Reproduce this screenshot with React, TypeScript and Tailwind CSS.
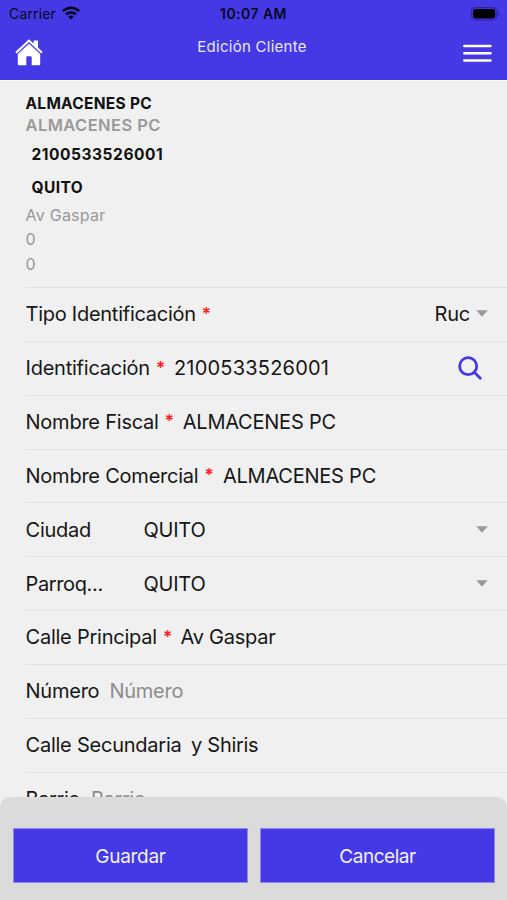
import React from 'react';

interface FieldRowProps {
  label: string;
  required?: boolean;
  labelClass?: string;
  children?: React.ReactNode;
}

const Caret: React.FC = () => (
  <svg width="12" height="7" viewBox="0 0 12 7" className="mb-px shrink-0" fill="#999999">
    <path d="M0.3 0.3H11.7L6 6.7Z" />
  </svg>
);

const FieldRow: React.FC<FieldRowProps> = ({ label, required, labelClass = '', children }) => (
  <div className="ml-[25px] flex h-[53.85px] shrink-0 items-center whitespace-pre border-b border-[#e2e2e2] pl-[0.5px] pr-[19px] text-[20px] tracking-[-0.23px] text-[#161616]">
    <span className={labelClass}>{label}</span>
    {required && <span className="ml-[6px] w-[9px] text-[17px] font-semibold text-[#ff1a1a]">*</span>}
    {children}
  </div>
);

const StatusBar: React.FC = () => (
  <div className="grid h-[27px] grid-cols-3 items-center pl-[9px] pr-[7px] text-[14px] text-[#080820]">
    <div className="flex items-center gap-[6px]">
      <span className="tracking-[0.15px]">Carrier</span>
      <svg width="18" height="14" viewBox="0 0 18 14" className="mb-px" fill="none" stroke="#05051a" strokeWidth="2.5">
        <path d="M0.9 5.2C5.4 0.6 12.6 0.6 17.1 5.2" />
        <path d="M4 8.4C6.8 5.7 11.2 5.7 14 8.4" />
        <path d="M6.3 10.6C7.8 9.2 10.2 9.2 11.7 10.6L9 13.5Z" fill="#05051a" stroke="none" />
      </svg>
    </div>
    <span className="-ml-[2px] text-center font-semibold tracking-[0.45px]">10:07 AM</span>
    <svg width="29" height="14" viewBox="0 0 29 14" className="justify-self-end">
      <rect x="0.6" y="0.6" width="25" height="12.4" rx="3.6" fill="none" stroke="#2a239c" strokeWidth="1.1" />
      <rect x="2" y="2" width="22.2" height="9.6" rx="2.4" fill="#000000" />
      <path d="M27 4.8C28.8 5.4 28.8 8.2 27 8.8Z" fill="#2a239c" />
    </svg>
  </div>
);

const Header: React.FC = () => (
  <header className="h-[81px] shrink-0 border-b border-white bg-[#4439e5]">
    <StatusBar />
    <div className="flex h-[53px] items-start justify-between px-[15px]">
      <button aria-label="Inicio" className="mt-[12px]">
        <svg width="28" height="27" viewBox="0 0 28 27" fill="#ffffff">
          <path d="M0.3 13L14 0.2L18.6 4.5V1.6H23V8.5L27.7 13L26.3 14.5L14 3.1L1.7 14.5Z" />
          <path d="M2.8 15.1L14 4.8L25.2 15.1V25.2Q25.2 26.3 24.1 26.3H16.7V18.2Q16.7 17.3 15.8 17.3H12.2Q11.3 17.3 11.3 18.2V26.3H3.9Q2.8 26.3 2.8 25.2Z" />
        </svg>
      </button>
      <h1 className="mr-0.5 mt-[8px] text-[15px] leading-6 tracking-[0.27px] text-[#e9e7ff]">Edición Cliente</h1>
      <button aria-label="Menú" className="mt-[16px]">
        <svg width="29" height="20" viewBox="0 0 29 20" stroke="#ffffff" strokeWidth="2.5" strokeLinecap="round">
          <path d="M1.3 3H27.5M1.3 10.2H27.5M1.3 17.4H27.5" />
        </svg>
      </button>
    </div>
  </header>
);

const Summary: React.FC = () => (
  <section className="ml-[25px] flex h-[207px] shrink-0 flex-col border-b border-[#e2e2e2] pl-[0.5px] pt-[12px] text-[16px] text-[#999999]">
    <p className="text-[15.5px] font-bold leading-[21px] tracking-[0.28px] text-[#111111]">ALMACENES PC</p>
    <p className="text-[16.5px] font-semibold leading-[22px] tracking-[0.42px]">ALMACENES PC</p>
    <p className="ml-1.5 mt-2 text-[15.5px] font-bold leading-[22px] tracking-[0.55px] text-[#111111]">2100533526001</p>
    <p className="ml-1.5 mt-[11px] text-[15.5px] font-bold leading-[22px] tracking-[0.4px] text-[#111111]">QUITO</p>
    <p className="mt-1 leading-[24.3px] tracking-[0.25px]">Av Gaspar</p>
    <p className="leading-[24.3px]">0</p>
    <p className="leading-[24.3px]">0</p>
  </section>
);

export default function App() {
  return (
    <div className="flex h-[900px] w-full flex-col overflow-hidden bg-[#f0f0f0] font-[Inter,sans-serif]">
      <Header />
      <main className="flex min-h-0 flex-1 flex-col overflow-hidden">
        <Summary />
        <FieldRow label="Tipo Identificación" required labelClass="tracking-[-0.26px]">
          <div className="ml-auto flex items-center gap-[6px]">
            <span>Ruc</span>
            <Caret />
          </div>
        </FieldRow>
        <FieldRow label="Identificación" required>
          <span className="ml-[9px] tracking-[0.2px]">2100533526001</span>
          <svg width="24" height="24" viewBox="0 0 25 25" className="ml-auto mr-[6px]" fill="none" stroke="#4439e5" strokeWidth="2.9" strokeLinecap="round">
            <circle cx="10.6" cy="10.6" r="8.9" />
            <path d="M17 17L23.2 23.2" />
          </svg>
        </FieldRow>
        <FieldRow label="Nombre Fiscal" required>
          <span className="ml-[9px]">ALMACENES PC</span>
        </FieldRow>
        <FieldRow label="Nombre Comercial" required>
          <span className="ml-[9.5px]">ALMACENES PC</span>
        </FieldRow>
        <FieldRow label="Ciudad" labelClass="w-[118px]">
          <span className="flex-1">QUITO</span>
          <Caret />
        </FieldRow>
        <FieldRow label="Parroq..." labelClass="w-[118px] tracking-[-0.36px]">
          <span className="flex-1">QUITO</span>
          <Caret />
        </FieldRow>
        <FieldRow label="Calle Principal" required>
          <span className="ml-[8.5px]">Av Gaspar</span>
        </FieldRow>
        <FieldRow label="Número">
          <span className="ml-[10px] text-[#8c8c8c]">Número</span>
        </FieldRow>
        <FieldRow label="Calle Secundaria">
          <span className="ml-[9.5px] tracking-[-0.3px]">y Shiris</span>
        </FieldRow>
        <FieldRow label="Barrio" labelClass="tracking-[-0.4px]">
          <span className="ml-[11px] tracking-[-0.4px] text-[#8c8c8c]">Barrio</span>
        </FieldRow>
      </main>
      <footer className="flex h-[103px] shrink-0 gap-3 rounded-t-[10px] bg-[#dbdbdb] pl-[13px] pr-3 pt-[31px] text-[19px] tracking-[-0.3px] text-[#f1f0ff]">
        <button className="h-[55px] flex-1 border border-[#8f89ee] bg-[#4439e5] pt-[3px]">Guardar</button>
        <button className="h-[55px] flex-1 border border-[#8f89ee] bg-[#4439e5] pt-[3px] tracking-[-0.45px]">Cancelar</button>
      </footer>
    </div>
  );
}
